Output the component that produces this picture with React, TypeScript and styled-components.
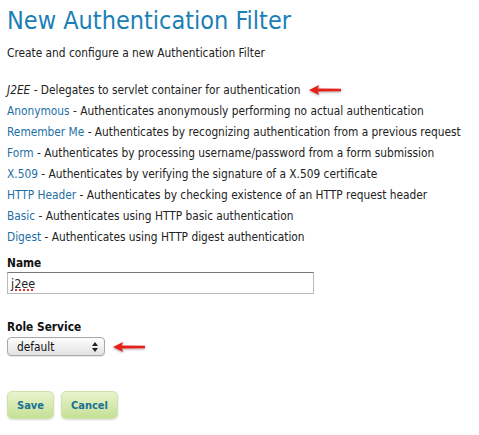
import React from "react";
import styled, { createGlobalStyle } from "styled-components";

const Global = createGlobalStyle`
  html, body { margin: 0; padding: 0; background: #fff; }
  body {
    font-family: "DejaVu Sans Condensed", "DejaVu Sans", Verdana, sans-serif;
    font-stretch: condensed;
    font-size: 11.8px;
    color: #222;
  }
`;

const Page = styled.div`
  padding: 4px 7px;
  display: flex;
  flex-direction: column;
`;

const Title = styled.h1`
  margin: 0;
  font-family: inherit;
  font-weight: normal;
  font-size: 25px;
  line-height: 34px;
  color: #1b7fb6;
`;

const Subtitle = styled.p`
  margin: 7px 0 0;
  line-height: 16px;
`;

const List = styled.ul`
  list-style: none;
  margin: 18px 0 0;
  padding: 0;
  display: flex;
  flex-direction: column;
`;

const Item = styled.li`
  display: flex;
  align-items: center;
  height: 21px;
  white-space: nowrap;
`;

const Link = styled.a<{ $current?: boolean }>`
  color: ${(p) => (p.$current ? "#222" : "#1e6fa6")};
  font-style: ${(p) => (p.$current ? "italic" : "normal")};
  text-decoration: none;
`;

const Field = styled.div<{ $top: number }>`
  display: flex;
  flex-direction: column;
  gap: 2px;
  margin-top: ${(p) => p.$top}px;
`;

const Label = styled.label`
  font-weight: bold;
  color: #111;
`;

const InputBox = styled.div`
  box-sizing: border-box;
  width: 307px;
  height: 22px;
  border: 1px solid #bbb;
  border-top-color: #777;
  padding: 0 3px;
  display: flex;
  align-items: center;
  font-size: 12.5px;
  color: #222;
`;

const Misspelled = styled.span`
  text-decoration-line: underline;
  text-decoration-style: dotted;
  text-decoration-color: #e03030;
  text-decoration-thickness: 2px;
  text-underline-offset: 2px;
`;

const SelectRow = styled.div`
  display: flex;
  align-items: center;
  gap: 6px;
  margin-top: 1px;
`;

const Select = styled.div`
  box-sizing: border-box;
  width: 98px;
  height: 19px;
  border: 1px solid #a8a8a8;
  border-radius: 4px;
  background: linear-gradient(#fdfdfd, #e2e2e2);
  display: flex;
  align-items: center;
  justify-content: space-between;
  padding: 0 6px 0 9px;
  color: #111;
  box-shadow: 0 1px 1px rgba(0,0,0,0.1);
`;

const Buttons = styled.div`
  display: flex;
  gap: 7px;
  margin-top: 35px;
`;

const Button = styled.button`
  box-sizing: border-box;
  height: 28px;
  padding: 0 9px;
  border: 1px solid #cfe3a8;
  border-radius: 5px;
  background: linear-gradient(#e8f4cd, #c6e096);
  color: #1a6f95;
  font-family: inherit;
  font-stretch: condensed;
  font-weight: bold;
  font-size: 11px;
  box-shadow: 0 1px 2px rgba(0,0,0,0.15);
`;

const Arrow = () => (
  <svg width="36" height="14" viewBox="0 0 36 14">
    <defs>
      <filter id="sh" x="-20%" y="-50%" width="140%" height="200%">
        <feDropShadow dx="0" dy="1" stdDeviation="1" floodColor="#000" floodOpacity="0.35" />
      </filter>
    </defs>
    <path d="M2 7 L12 2 L11 5.5 L34 5.8 L34 8.2 L11 8.5 L12 12 Z" fill="#e3221b" filter="url(#sh)" />
  </svg>
);

const Updown = () => (
  <svg width="6" height="10" viewBox="0 0 6 10">
    <path d="M3 0 L6 4 L0 4 Z M3 10 L6 6 L0 6 Z" fill="#222" />
  </svg>
);

const filters: [string, string][] = [
  ["Anonymous", "Authenticates anonymously performing no actual authentication"],
  ["Remember Me", "Authenticates by recognizing authentication from a previous request"],
  ["Form", "Authenticates by processing username/password from a form submission"],
  ["X.509", "Authenticates by verifying the signature of a X.509 certificate"],
  ["HTTP Header", "Authenticates by checking existence of an HTTP request header"],
  ["Basic", "Authenticates using HTTP basic authentication"],
  ["Digest", "Authenticates using HTTP digest authentication"],
];

export default function App() {
  return (
    <>
      <Global />
      <Page>
        <Title>New Authentication Filter</Title>
        <Subtitle>Create and configure a new Authentication Filter</Subtitle>
        <List>
          <Item>
            <Link $current>J2EE</Link>&nbsp;- Delegates to servlet container for authentication&nbsp;&nbsp;
            <Arrow />
          </Item>
          {filters.map(([n, d]) => (
            <Item key={n}>
              <Link href="#">{n}</Link>&nbsp;- {d}
            </Item>
          ))}
        </List>
        <Field $top={9}>
          <Label>Name</Label>
          <InputBox>
            <Misspelled>j2ee</Misspelled>
          </InputBox>
        </Field>
        <Field $top={26}>
          <Label>Role Service</Label>
          <SelectRow>
            <Select>
              <span>default</span>
              <Updown />
            </Select>
            <Arrow />
          </SelectRow>
        </Field>
        <Buttons>
          <Button>Save</Button>
          <Button>Cancel</Button>
        </Buttons>
      </Page>
    </>
  );
}
